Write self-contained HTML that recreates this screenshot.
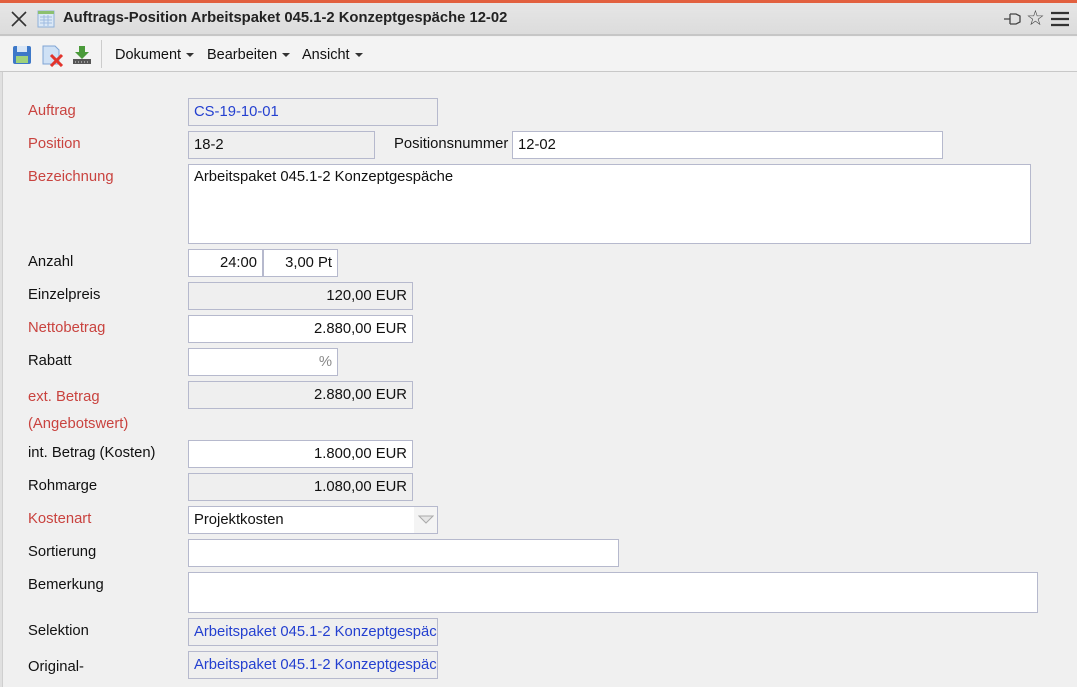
<!DOCTYPE html>
<html><head><meta charset="utf-8">
<style>
*{box-sizing:border-box;margin:0;padding:0}
html,body{width:1077px;height:687px;overflow:hidden}
body{background:#f0f0f0;font-family:"Liberation Sans",Tahoma,sans-serif;font-size:14.8px;color:#111;position:relative}
.a{position:absolute}
#top{left:0;top:0;width:1077px;height:3px;background:#e2603f}
#title{left:0;top:3px;width:1077px;height:33px;background:linear-gradient(#e6e6e6,#dcdcdc);border-bottom:2px solid #c6c6c6}
#tb{left:0;top:37px;width:1077px;height:35px;background:#f3f3f3;border-bottom:1px solid #c8c8c8}
#lb{left:0;top:72px;width:3px;height:615px;background:#e0e0e0;border-right:1px solid #cfcfcf}
.t{font-weight:bold;font-size:14.8px;color:#222}
.lbl{left:28px;line-height:20px}
.r{color:#c9433f}
.f{height:28px;border:1px solid #b6b9cd;background:#fff;line-height:26px;padding:0 5px;white-space:nowrap;overflow:hidden}
.g{background:#efefef}
.num{text-align:right}
.blue{color:#2440d0}
.menu{top:46px;line-height:18px;font-size:14.5px}
.menu:after{content:"";display:inline-block;margin-left:5px;vertical-align:middle;border:4px solid transparent;border-top:4px solid #333;border-bottom:0}
</style></head><body>
<div class="a" id="top"></div>
<div class="a" id="title"></div>
<svg class="a" style="left:10px;top:10px" width="18" height="18" viewBox="0 0 18 18"><path d="M2 2L16 16M16 2L2 16" stroke="#333" stroke-width="1.6"/></svg>
<svg class="a" style="left:37px;top:10px" width="18" height="18" viewBox="0 0 18 18"><rect x="1" y="1" width="16" height="16" fill="#dbe8f6" stroke="#8fb0d8"/><rect x="1" y="1" width="16" height="3" fill="#8cc070"/><path d="M3 7H15M3 10H15M3 13H15M7 5V16M11 5V16" stroke="#9fbbe0"/></svg>
<div class="a t" style="left:63px;top:10px">Auftrags-Position Arbeitspaket 045.1-2 Konzeptgespäche 12-02</div>
<svg class="a" style="left:1003px;top:11px" width="20" height="16" viewBox="0 0 20 16"><path d="M1 8H7M7 3V13M7 3H13L17 5V11L13 13H7" fill="none" stroke="#444" stroke-width="1.3"/></svg>
<div class="a" style="left:1026px;top:6px;font-size:21px;color:#444">☆</div>
<svg class="a" style="left:1050px;top:11px" width="20" height="16" viewBox="0 0 20 16"><path d="M1 2H19M1 8H19M1 14H19" stroke="#333" stroke-width="2.2"/></svg>

<div class="a" id="tb"></div>
<svg class="a" style="left:12px;top:45px" width="20" height="20" viewBox="0 0 20 20"><rect x="1" y="1" width="18" height="18" rx="2" fill="#3d78c8"/><rect x="5" y="1" width="10" height="6" fill="#d8e6f6"/><rect x="4" y="11" width="12" height="7" fill="#9fd27a"/></svg>
<svg class="a" style="left:42px;top:45px" width="22" height="22" viewBox="0 0 22 22"><path d="M1 1H13L17 5V19H1Z" fill="#cfe1f5" stroke="#7fa4d4"/><path d="M9 10L20 21M20 10L9 21" stroke="#e2342c" stroke-width="3"/></svg>
<svg class="a" style="left:72px;top:45px" width="20" height="20" viewBox="0 0 20 20"><path d="M7 1H13V7H17L10 14L3 7H7Z" fill="#4a9a3a"/><rect x="1" y="14" width="18" height="5" fill="#555"/><path d="M3 17H17" stroke="#ddd" stroke-dasharray="1 2"/></svg>
<div class="a" style="left:101px;top:40px;width:1px;height:28px;background:#ccc"></div>
<div class="a menu" style="left:115px">Dokument</div>
<div class="a menu" style="left:207px">Bearbeiten</div>
<div class="a menu" style="left:302px">Ansicht</div>
<div class="a" id="lb"></div>

<div class="a lbl r" style="top:101px">Auftrag</div>
<div class="a f g blue" style="left:188px;top:98px;width:250px">CS-19-10-01</div>
<div class="a lbl r" style="top:134px">Position</div>
<div class="a f g" style="left:188px;top:131px;width:187px">18-2</div>
<div class="a" style="left:394px;top:134px;line-height:20px">Positionsnummer</div>
<div class="a f" style="left:512px;top:131px;width:431px">12-02</div>
<div class="a lbl r" style="top:167px">Bezeichnung</div>
<div class="a f" style="left:188px;top:164px;width:843px;height:80px;line-height:24px">Arbeitspaket 045.1-2 Konzeptgespäche</div>
<div class="a lbl" style="top:252px">Anzahl</div>
<div class="a f num" style="left:188px;top:249px;width:75px">24:00</div>
<div class="a f num" style="left:263px;top:249px;width:75px">3,00 Pt</div>
<div class="a lbl" style="top:285px">Einzelpreis</div>
<div class="a f g num" style="left:188px;top:282px;width:225px">120,00 EUR</div>
<div class="a lbl r" style="top:318px">Nettobetrag</div>
<div class="a f num" style="left:188px;top:315px;width:225px">2.880,00 EUR</div>
<div class="a lbl" style="top:351px">Rabatt</div>
<div class="a f num" style="left:188px;top:348px;width:150px;color:#888">%</div>
<div class="a lbl r" style="top:384px;line-height:27px">ext. Betrag<br>(Angebotswert)</div>
<div class="a f g num" style="left:188px;top:381px;width:225px">2.880,00 EUR</div>
<div class="a lbl" style="top:443px">int. Betrag (Kosten)</div>
<div class="a f num" style="left:188px;top:440px;width:225px">1.800,00 EUR</div>
<div class="a lbl" style="top:476px">Rohmarge</div>
<div class="a f g num" style="left:188px;top:473px;width:225px">1.080,00 EUR</div>
<div class="a lbl r" style="top:509px">Kostenart</div>
<div class="a f" style="left:188px;top:506px;width:250px">Projektkosten</div>
<div class="a" style="left:414px;top:507px;width:23px;height:26px;background:#f4f4f4"></div>
<svg class="a" style="left:418px;top:515px" width="16" height="10" viewBox="0 0 16 10"><path d="M1 1H15L8 8Z" fill="#e6e6e6" stroke="#aaa"/></svg>
<div class="a lbl" style="top:542px">Sortierung</div>
<div class="a f" style="left:188px;top:539px;width:431px"></div>
<div class="a lbl" style="top:575px">Bemerkung</div>
<div class="a f" style="left:188px;top:572px;width:850px;height:41px"></div>
<div class="a lbl" style="top:621px">Selektion</div>
<div class="a f g blue" style="left:188px;top:618px;width:250px">Arbeitspaket 045.1-2 Konzeptgespäche</div>
<div class="a lbl" style="top:654px;line-height:27px">Original-</div>
<div class="a lbl" style="top:681px;line-height:27px;height:6px;overflow:hidden">Angebotswert</div>
<div class="a f g blue" style="left:188px;top:651px;width:250px">Arbeitspaket 045.1-2 Konzeptgespäche</div>
</body></html>
